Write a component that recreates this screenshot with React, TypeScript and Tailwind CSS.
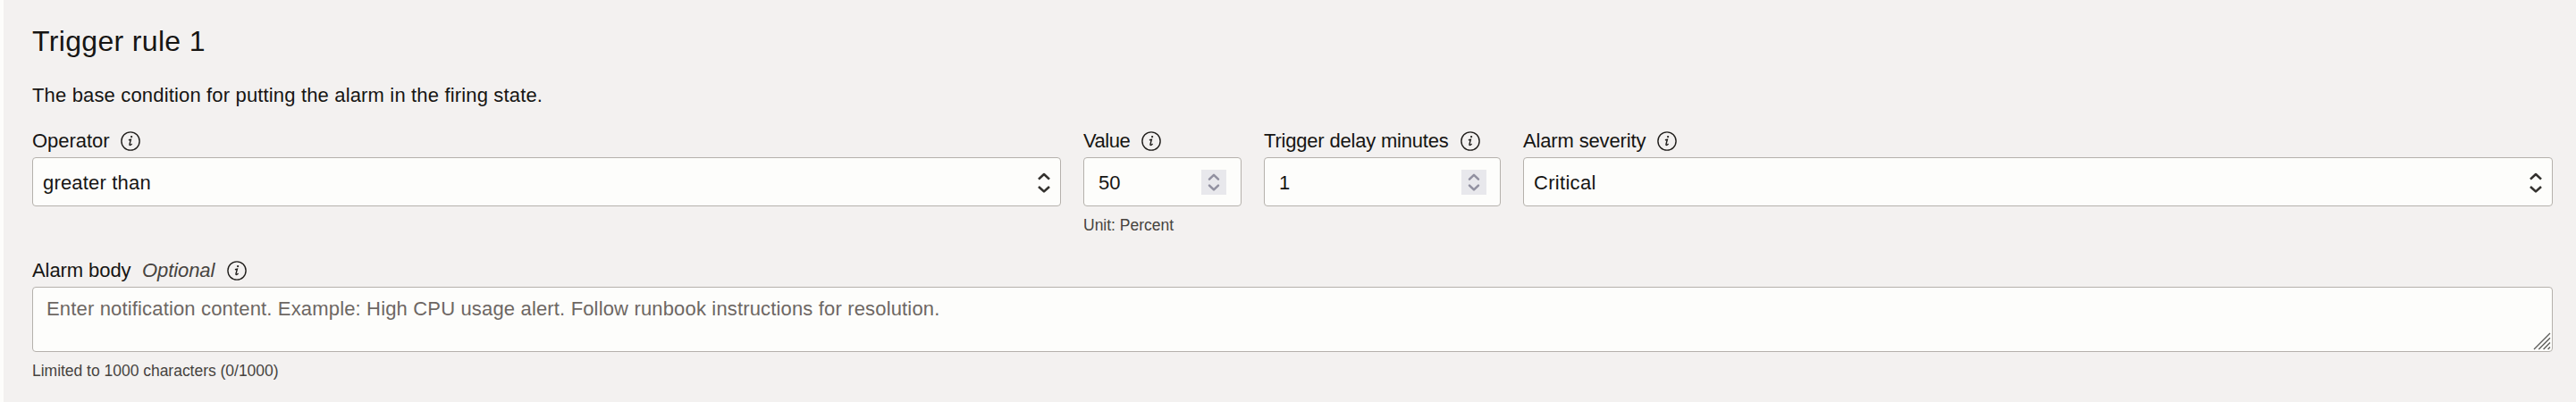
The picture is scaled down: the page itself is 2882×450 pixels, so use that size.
import type { ReactNode } from 'react';

function InfoIcon() {
  return (
    <svg className="h-[22px] w-[22px] shrink-0" viewBox="0 0 22 22" fill="none" stroke="#1f1d1a">
      <circle cx="11" cy="11" r="10.1" strokeWidth="1.4" />
      <circle cx="12.1" cy="6.1" r="1.15" fill="#1f1d1a" stroke="none" />
      <path d="M8.9 9.7 L11.4 9.2 L10 14.4 Q9.8 15.7 10.7 15.4 Q11.6 15.1 12.5 13.8" strokeWidth="1.4" />
    </svg>
  );
}

function SelectArrows() {
  return (
    <svg className="h-6 w-4 shrink-0" viewBox="0 0 16 24" fill="none" stroke="#33312e" strokeWidth="2.6">
      <path d="M2 8.6 L8 3 L14 8.6 M2 17 L8 22.4 L14 17" strokeLinejoin="round" />
    </svg>
  );
}

function Spinner() {
  return (
    <span className="flex h-7 w-7 shrink-0 items-center justify-center bg-[#e8e8ec]">
      <svg className="h-7 w-7" viewBox="0 0 28 28" fill="none" stroke="#9190a0" strokeWidth="2.5">
        <path d="M9 10.6 L14 5.8 L19 10.6 M9 17.6 L14 22.4 L19 17.6" strokeLinecap="round" strokeLinejoin="round" />
      </svg>
    </span>
  );
}

function Label({ children, className }: { children: ReactNode; className: string }) {
  return (
    <div className="mb-[3px] flex h-8 items-center pt-[2px]">
      <span className={className}>{children}</span>
      <InfoIcon />
    </div>
  );
}

const box = 'flex h-[55px] items-center rounded-[4px] border border-[#b5b1ac] bg-[#fdfdfb]';

export default function App() {
  return (
    <div className="h-[450px] w-[2882px] bg-[#fdfdfb] pl-1 font-['Liberation_Sans',Arial,sans-serif] text-[22px] leading-7 text-[#161513]">
      <div className="h-full bg-[#f3f1f0] pt-[26px] pr-[26px] pl-8">
        <h2 className="text-[32px] leading-10 tracking-[0.34px]">Trigger rule 1</h2>
        <p className="mt-[27px] tracking-[0.16px]">The base condition for putting the alarm in the firing state.</p>
        <div className="mt-[20px] flex h-[123px] gap-[25px]">
          <div className="w-[1151px]">
            <Label className="w-[99px] tracking-[-0.05px]">Operator</Label>
            <div className={`${box} justify-between pr-[10px] pl-[11px]`}>
              <span className="pt-[2px] tracking-[0.18px]">greater than</span>
              <SelectArrows />
            </div>
          </div>
          <div className="w-[177px]">
            <Label className="w-[65px] tracking-[-0.5px]">Value</Label>
            <div className={`${box} justify-between pr-4 pl-4`}>
              <span className="pt-[2px]">50</span>
              <Spinner />
            </div>
            <div className="mt-[9px] text-[17.5px] leading-6 text-[#46433f]">Unit: Percent</div>
          </div>
          <div className="w-[265px]">
            <Label className="w-[220px] tracking-[-0.2px]">Trigger delay minutes</Label>
            <div className={`${box} justify-between pr-[15px] pl-4`}>
              <span className="pt-[2px]">1</span>
              <Spinner />
            </div>
          </div>
          <div className="w-[1152px]">
            <Label className="w-[150px] tracking-[-0.15px]">Alarm severity</Label>
            <div className={`${box} justify-between pr-[10px] pl-[11px]`}>
              <span className="pt-[2px] tracking-[0.3px]">Critical</span>
              <SelectArrows />
            </div>
          </div>
        </div>
        <div className="mt-[22px]">
          <Label className="flex w-[218px]">
            <span className="w-[123px] tracking-[-0.08px]">Alarm body</span>
            <span className="tracking-[-0.08px] text-[#46433f] italic">Optional</span>
          </Label>
        </div>
        <div className="relative h-[73px] rounded-[4px] border border-[#b5b1ac] bg-[#fdfdfb] pt-[10px] pl-[15px] tracking-[0.16px] text-[#6d6763]">
          Enter notification content. Example: High CPU usage alert. Follow runbook instructions for resolution.
          <svg className="absolute right-[1px] bottom-[1px] h-5 w-5" viewBox="0 0 20 20" fill="none" stroke="#5f5f5b" strokeWidth="1.4">
            <path d="M1 19 L19 1 M6.3 19 L19 6.3 M11.6 19 L19 11.6 M16.6 19 L19 16.6" />
          </svg>
        </div>
        <div className="mt-[9px] text-[17.5px] leading-6 tracking-[-0.02px] text-[#46433f]">Limited to 1000 characters (0/1000)</div>
      </div>
    </div>
  );
}
